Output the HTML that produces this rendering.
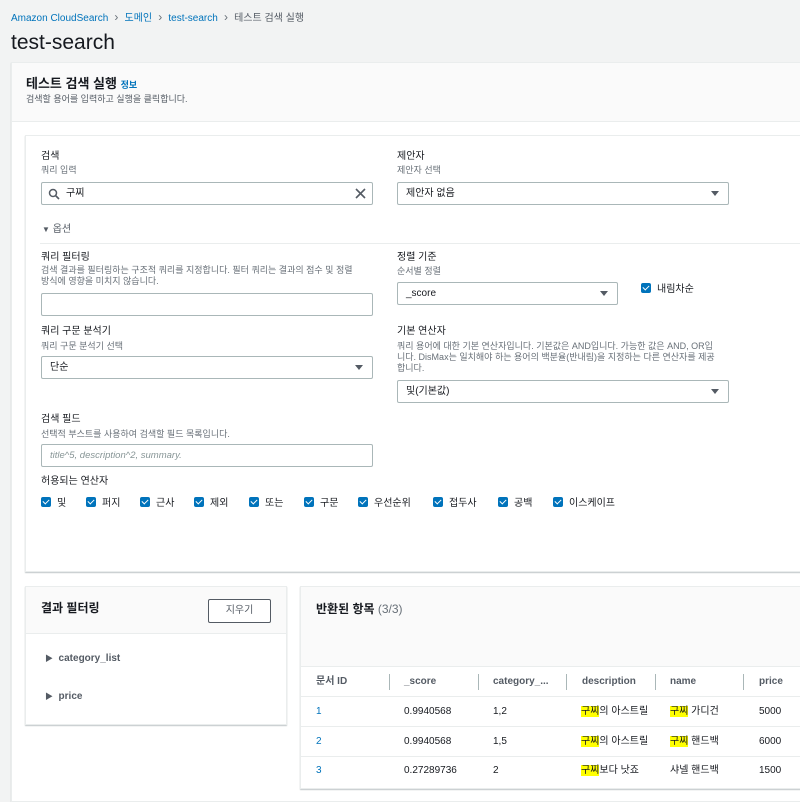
<!DOCTYPE html>
<html><head><meta charset="utf-8"><style>
*{box-sizing:border-box;margin:0;padding:0}
body{width:800px;height:792px;overflow:hidden;background:#f2f3f3;font-family:"Liberation Sans","Noto Sans CJK KR",sans-serif;color:#16191f;position:relative}
.a{position:absolute;white-space:nowrap;line-height:1.4}
.lbl{font-size:10px;color:#16191f}
.sub{font-size:9px;color:#687078}
.inp{position:absolute;height:23px;border:1px solid #aab7b8;background:#fff;border-radius:2px;font-size:10px;line-height:21px;padding-left:8px}
.tri{position:absolute;right:9px;top:8px;width:0;height:0;border-left:4px solid transparent;border-right:4px solid transparent;border-top:5px solid #545b64}
.cb{display:inline-block;width:10px;height:10px;background:#0073bb;border-radius:2px;vertical-align:-1px;margin-right:6px;position:relative}
.cb:after{content:"";position:absolute;left:3px;top:1px;width:3px;height:5px;border:solid #fff;border-width:0 1.5px 1.5px 0;transform:rotate(45deg)}
.ops span.o{position:absolute;top:0;font-size:10px;line-height:12px}
.hl{background:#ffff00}
.th{position:absolute;top:676px;font-size:10px;font-weight:bold;color:#545b64;line-height:12px}
.sep{position:absolute;top:674px;width:1px;height:16px;background:#aab7b8}
.td{position:absolute;font-size:10px;color:#16191f;line-height:12px;height:12px}
</style></head><body>
<div class="a" style="left:11px;top:9px;font-size:10px;color:#0073bb">Amazon CloudSearch <span style="color:#687078;font-size:12px">&nbsp;›&nbsp;</span> 도메인 <span style="color:#687078;font-size:12px">&nbsp;›&nbsp;</span> test-search <span style="color:#687078;font-size:12px">&nbsp;›&nbsp;</span> <span style="color:#545b64">테스트 검색 실행</span></div>
<div class="a" style="left:11px;top:30px;font-size:21px;line-height:1.2;color:#16191f">test-search</div>

<div style="position:absolute;left:11px;top:62px;width:800px;height:740px;background:#fff;border:1px solid #eaeded;box-shadow:0 1px 1px rgba(0,28,36,.2)"></div>
<div style="position:absolute;left:12px;top:63px;width:790px;height:59px;background:#fafafa;border-bottom:1px solid #eaeded"></div>
<div class="a" style="left:26px;top:75px;font-size:13px;font-weight:bold">테스트 검색 실행 <span style="font-size:9px;color:#0073bb">정보</span></div>
<div class="a sub" style="left:26px;top:93px;color:#545b64">검색할 용어를 입력하고 실행을 클릭합니다.</div>

<div style="position:absolute;left:25px;top:135px;width:790px;height:437px;background:#fff;border:1px solid #eaeded;box-shadow:0 1px 1px rgba(0,28,36,.25)"></div>
<div class="a lbl" style="left:41px;top:150px">검색</div>
<div class="a sub" style="left:41px;top:164px">쿼리 입력</div>
<div class="inp" style="left:41px;top:182px;width:332px;padding-left:24px">구찌
<svg style="position:absolute;left:6px;top:5px" width="12" height="12" viewBox="0 0 12 12"><circle cx="5" cy="5" r="3.5" fill="none" stroke="#545b64" stroke-width="1.5"/><path d="M7.5 7.5L11 11" stroke="#545b64" stroke-width="1.6"/></svg>
<svg style="position:absolute;right:6px;top:5px" width="11" height="11" viewBox="0 0 11 11"><path d="M1 1L10 10M10 1L1 10" stroke="#545b64" stroke-width="1.6"/></svg></div>
<div class="a lbl" style="left:397px;top:150px">제안자</div>
<div class="a sub" style="left:397px;top:164px">제안자 선택</div>
<div class="inp" style="left:397px;top:182px;width:332px">제안자 없음<div class="tri"></div></div>

<div class="a" style="left:42px;top:223px;font-size:10px;color:#545b64"><span style="font-size:8px">▼</span> 옵션</div>
<div style="position:absolute;left:40px;top:243px;width:760px;height:1px;background:#eaeded"></div>

<div class="a lbl" style="left:41px;top:251px">쿼리 필터링</div>
<div class="a sub" style="left:41px;top:265px;line-height:11px">검색 결과를 필터링하는 구조적 쿼리를 지정합니다. 필터 쿼리는 결과의 점수 및 정렬<br>방식에 영향을 미치지 않습니다.</div>
<div class="inp" style="left:41px;top:293px;width:332px"></div>
<div class="a lbl" style="left:397px;top:251px">정렬 기준</div>
<div class="a sub" style="left:397px;top:265px">순서별 정렬</div>
<div class="inp" style="left:397px;top:282px;width:221px">_score<div class="tri"></div></div>
<div class="a" style="left:641px;top:283px;font-size:10px"><span class="cb"></span>내림차순</div>

<div class="a lbl" style="left:41px;top:325px">쿼리 구문 분석기</div>
<div class="a sub" style="left:41px;top:340px">쿼리 구문 분석기 선택</div>
<div class="inp" style="left:41px;top:356px;width:332px">단순<div class="tri"></div></div>
<div class="a lbl" style="left:397px;top:325px">기본 연산자</div>
<div class="a sub" style="left:397px;top:341px;line-height:11px">쿼리 용어에 대한 기본 연산자입니다. 기본값은 AND입니다. 가능한 값은 AND, OR입<br>니다. DisMax는 일치해야 하는 용어의 백분율(반내림)을 지정하는 다른 연산자를 제공<br>합니다.</div>
<div class="inp" style="left:397px;top:380px;width:332px">및(기본값)<div class="tri"></div></div>

<div class="a lbl" style="left:41px;top:413px">검색 필드</div>
<div class="a sub" style="left:41px;top:428px">선택적 부스트를 사용하여 검색할 필드 목록입니다.</div>
<div class="inp" style="left:41px;top:444px;width:332px;font-style:italic;color:#879596;font-size:9.5px">title^5, description^2, summary.</div>

<div class="a lbl" style="left:41px;top:475px">허용되는 연산자</div>
<div class="ops" style="position:absolute;left:0;top:497px;width:800px;height:14px">
<span class="o" style="left:41px"><span class="cb"></span>및</span>
<span class="o" style="left:86px"><span class="cb"></span>퍼지</span>
<span class="o" style="left:140px"><span class="cb"></span>근사</span>
<span class="o" style="left:194px"><span class="cb"></span>제외</span>
<span class="o" style="left:249px"><span class="cb"></span>또는</span>
<span class="o" style="left:304px"><span class="cb"></span>구문</span>
<span class="o" style="left:358px"><span class="cb"></span>우선순위</span>
<span class="o" style="left:433px"><span class="cb"></span>접두사</span>
<span class="o" style="left:498px"><span class="cb"></span>공백</span>
<span class="o" style="left:553px"><span class="cb"></span>이스케이프</span>
</div>

<div style="position:absolute;left:25px;top:586px;width:262px;height:139px;background:#fff;border:1px solid #eaeded;box-shadow:0 1px 1px rgba(0,28,36,.25)"></div>
<div style="position:absolute;left:26px;top:587px;width:260px;height:47px;background:#fafafa;border-bottom:1px solid #eaeded"></div>
<div class="a" style="left:41px;top:600px;font-size:12px;font-weight:bold">결과 필터링</div>
<div class="a" style="left:208px;top:599px;width:63px;height:24px;border:1px solid #545b64;border-radius:2px;background:#fff;font-size:10px;text-align:center;line-height:22px;color:#545b64">지우기</div>
<div class="a" style="left:45px;top:652px;font-size:10px;font-weight:bold;color:#545b64"><span style="font-size:8px">▶</span>&nbsp; category_list</div>
<div class="a" style="left:45px;top:690px;font-size:10px;font-weight:bold;color:#545b64"><span style="font-size:8px">▶</span>&nbsp; price</div>

<div style="position:absolute;left:300px;top:586px;width:510px;height:203px;background:#fff;border:1px solid #eaeded;box-shadow:0 1px 1px rgba(0,28,36,.25)"></div>
<div style="position:absolute;left:301px;top:587px;width:510px;height:80px;background:#fafafa;border-bottom:1px solid #eaeded"></div>
<div class="a" style="left:316px;top:601px;font-size:12px;font-weight:bold">반환된 항목 <span style="font-weight:normal;color:#687078">(3/3)</span></div>
<div style="position:absolute;left:301px;top:696px;width:510px;height:1px;background:#eaeded"></div>
<div style="position:absolute;left:301px;top:726px;width:510px;height:1px;background:#eaeded"></div>
<div style="position:absolute;left:301px;top:756px;width:510px;height:1px;background:#eaeded"></div>
<div class="th" style="left:316px">문서 ID</div><div class="sep" style="left:389px"></div>
<div class="th" style="left:404px">_score</div><div class="sep" style="left:478px"></div>
<div class="th" style="left:493px">category_...</div><div class="sep" style="left:566px"></div>
<div class="th" style="left:582px">description</div><div class="sep" style="left:655px"></div>
<div class="th" style="left:670px">name</div><div class="sep" style="left:743px"></div>
<div class="th" style="left:759px">price</div>
<div class="td" style="left:316px;top:706px;color:#0073bb">1</div><div class="td" style="left:404px;top:706px">0.9940568</div><div class="td" style="left:493px;top:706px">1,2</div><div class="td" style="left:581px;top:706px"><span class="hl">구찌</span>의 아스트릴</div><div class="td" style="left:670px;top:706px"><span class="hl">구찌</span> 가디건</div><div class="td" style="left:759px;top:706px">5000</div>
<div class="td" style="left:316px;top:736px;color:#0073bb">2</div><div class="td" style="left:404px;top:736px">0.9940568</div><div class="td" style="left:493px;top:736px">1,5</div><div class="td" style="left:581px;top:736px"><span class="hl">구찌</span>의 아스트릴</div><div class="td" style="left:670px;top:736px"><span class="hl">구찌</span> 핸드백</div><div class="td" style="left:759px;top:736px">6000</div>
<div class="td" style="left:316px;top:765px;color:#0073bb">3</div><div class="td" style="left:404px;top:765px">0.27289736</div><div class="td" style="left:493px;top:765px">2</div><div class="td" style="left:581px;top:765px"><span class="hl">구찌</span>보다 낫죠</div><div class="td" style="left:670px;top:765px">샤넬 핸드백</div><div class="td" style="left:759px;top:765px">1500</div>
</body></html>
